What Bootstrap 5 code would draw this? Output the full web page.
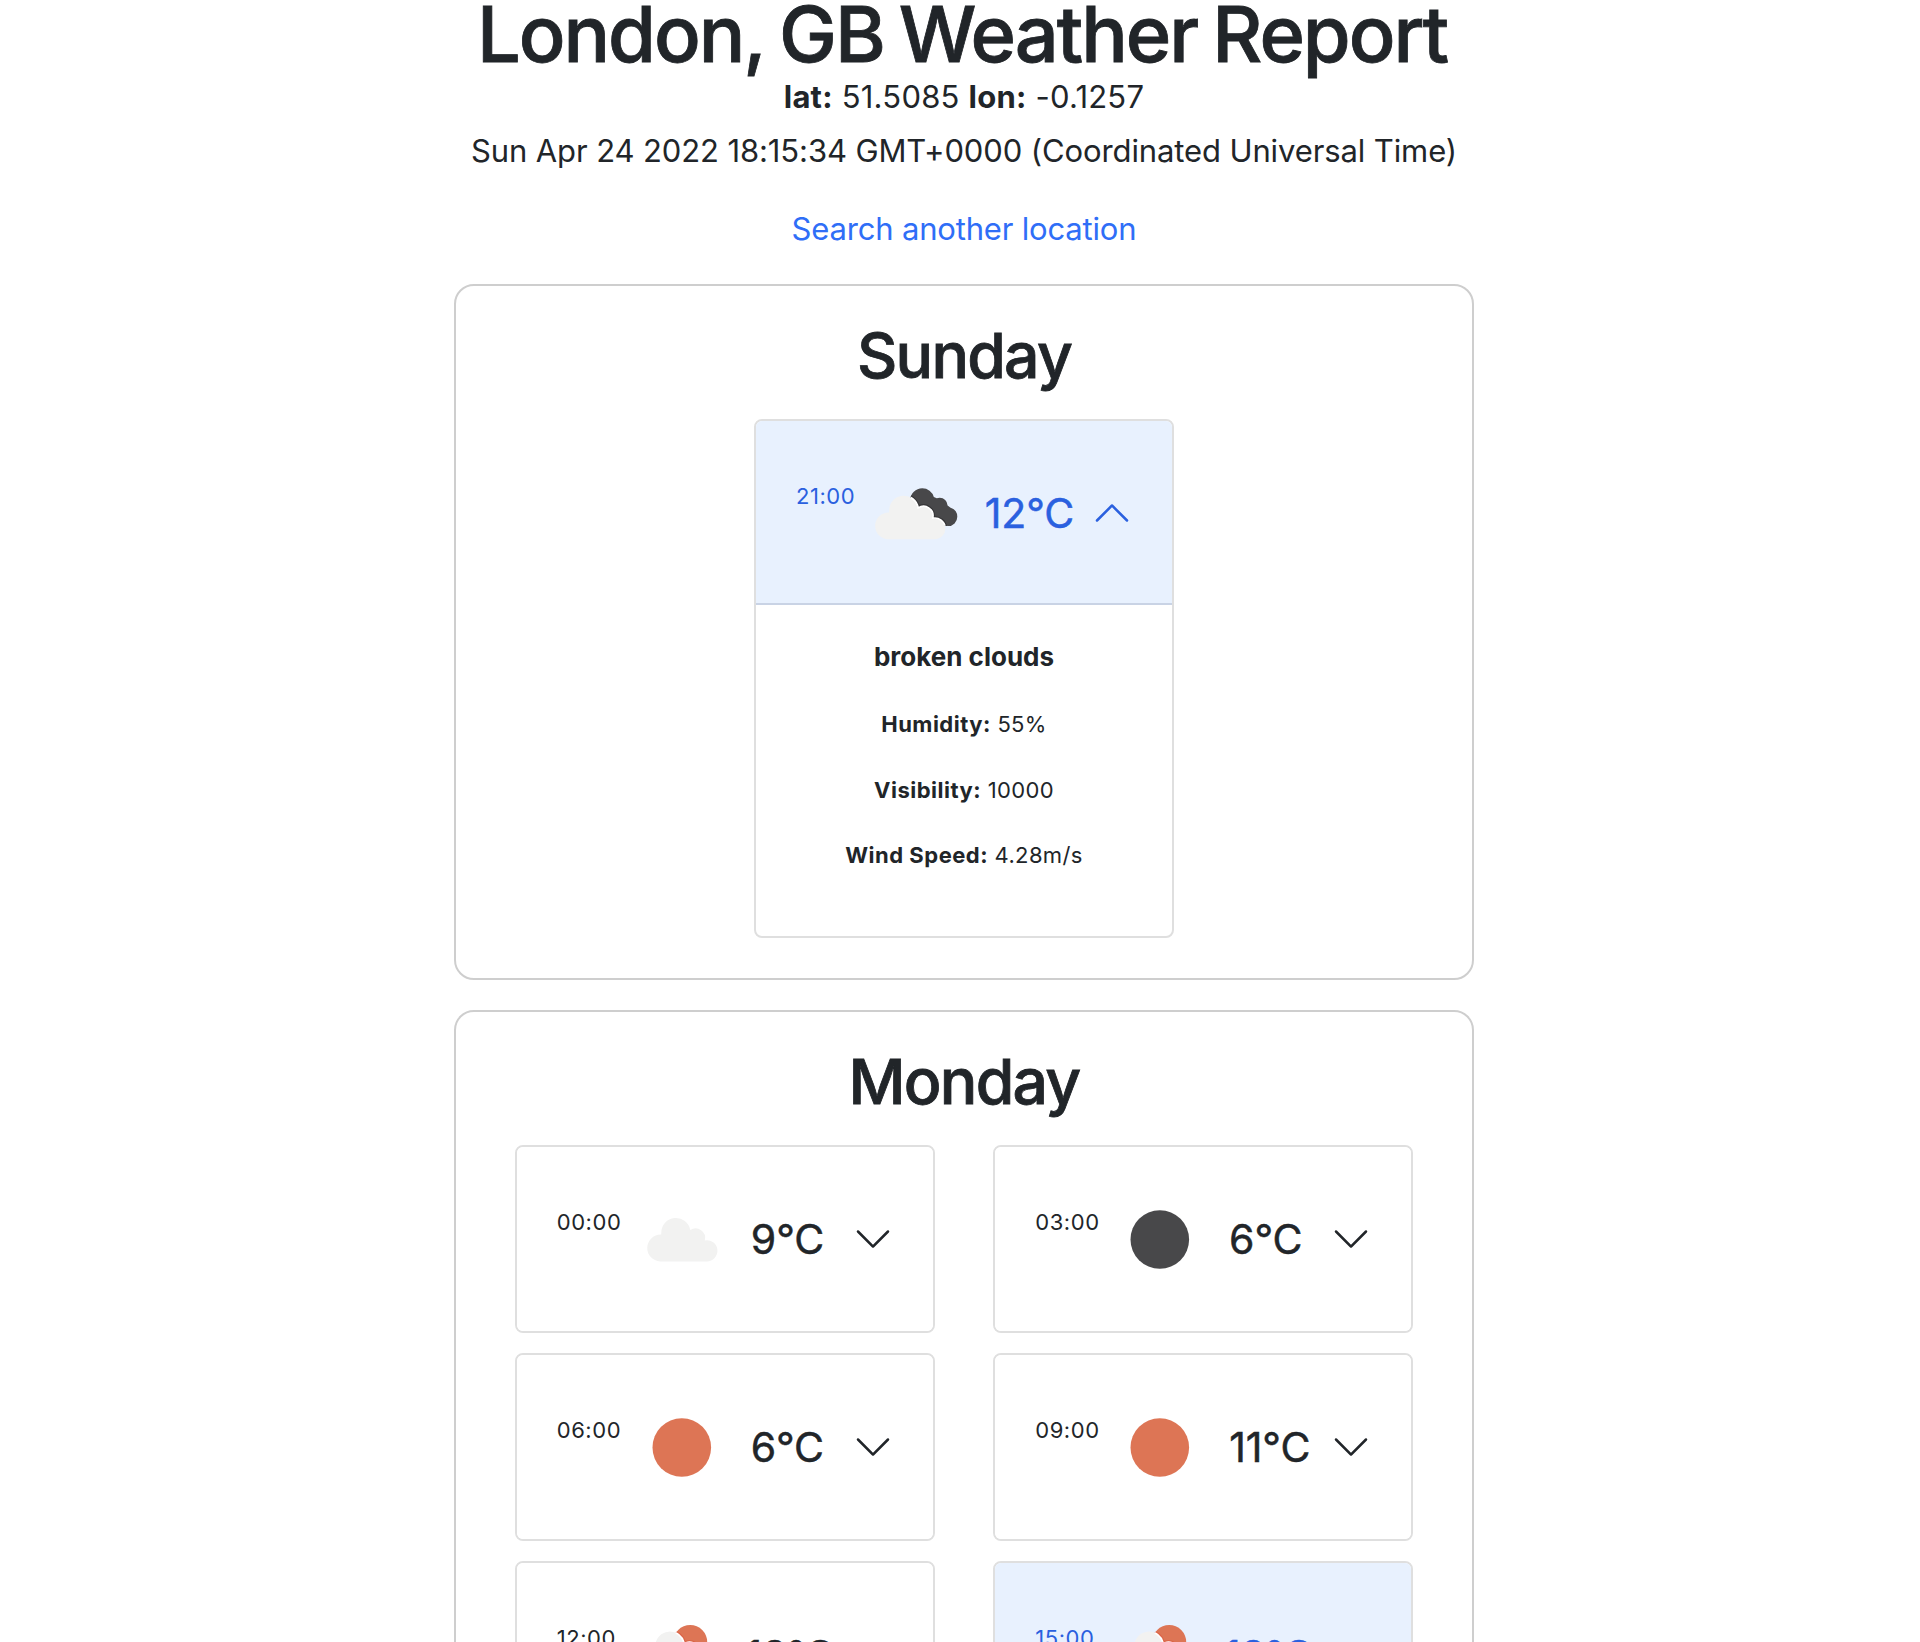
<!DOCTYPE html>
<html lang="en">
<head>
<meta charset="utf-8">
<meta name="viewport" content="width=device-width, initial-scale=1">
<title>London, GB Weather Report</title>
<link href="https://cdn.jsdelivr.net/npm/bootstrap@5.3.0/dist/css/bootstrap.min.css" rel="stylesheet">
<style>
body{font-family:Inter,"Liberation Sans",sans-serif;font-size:31px;line-height:48px;letter-spacing:-.11px;color:#212529;background:#fff}
.report{height:100vh;overflow:hidden;padding-left:8px}
.report-title{font-size:77.5px;font-weight:500;-webkit-text-stroke:.8px currentColor;line-height:78px;letter-spacing:-2.05px;word-spacing:-3.5px;margin:-5px 4px 0 0}
.coords{letter-spacing:.22px;margin-bottom:6px}
.stamp{margin-bottom:30px}
.search{letter-spacing:-.18px;margin-bottom:31px}
.search a{color:#2f6ef7}
.day{width:1020px;border:2px solid #cecece;border-radius:20px;padding:31px 0 40px;margin:0 auto 30px}
.day-name{font-size:62.5px;font-weight:500;-webkit-text-stroke:.8px currentColor;line-height:77px;letter-spacing:-1.75px;margin-bottom:25px}
.slots{gap:20px 58.5px}
.slot{width:420px;border:2px solid #dfdfdf;border-radius:8px;overflow:hidden}
.slot-head{height:184px;padding:0 40px;background:#fff;border:0;color:#212529;text-align:left}
.slot-head.open{background:#e8f1fe;color:#2a60df;box-shadow:inset 0 -2px #c9d3e5}
.slot-time{font-size:22px;line-height:34px;letter-spacing:.55px;margin:0 10.5px 34px 0}
.sky{width:100px;height:100px;flex:none}
.temp{font-size:41px;font-weight:400;-webkit-text-stroke:.5px currentColor;letter-spacing:-.1px;margin-left:19px}
.chev{width:40px;height:40px;flex:none}
.open .chev{transform:rotate(180deg)}
.slot-body{height:331px;padding-top:33px;font-size:22px;line-height:34px;letter-spacing:.35px}
.slot-body p{margin-bottom:31.7px}
.slot-body b{letter-spacing:.5px}
.slot-body .sky-text{font-size:26px;line-height:38px;letter-spacing:0;font-weight:700;margin-bottom:31px}
</style>
<script src="https://cdn.jsdelivr.net/npm/bootstrap@5.3.0/dist/js/bootstrap.bundle.min.js"></script>
</head>
<body>
<svg width="0" height="0" class="position-absolute" aria-hidden="true">
<defs>
<path id="cloud" d="M28 72.4A13.4 13.4 0 1 1 29.1 45.6L29.2 43.7A14.6 14.6 0 0 1 58.2 41.1A9.5 9.5 0 0 1 72.7 51.4A10.6 10.6 0 1 1 74.6 72.4Z"/>
<clipPath id="backClip"><circle cx="56.3" cy="37.2" r="12"/><circle cx="73.7" cy="42.7" r="7.9"/><circle cx="82" cy="53.8" r="9.3"/><path d="M48 46L60 30L68 34L76 38L86 46L84 58L72 66Z"/></clipPath>
<clipPath id="sunClip"><circle cx="64.2" cy="36.9" r="17"/></clipPath>
<path id="chevron" fill-rule="evenodd" d="M1.646 4.646a.5.5 0 0 1 .708 0L8 10.293l5.646-5.647a.5.5 0 0 1 .708.708l-6 6a.5.5 0 0 1-.708 0l-6-6a.5.5 0 0 1 0-.708z"/>
<symbol id="clouds" viewBox="0 0 100 100"><g fill="#f2f2f1"><use href="#cloud" x=".1"/></g></symbol>
<symbol id="clear-night" viewBox="0 0 100 100"><circle cx="49.8" cy="50.5" r="29.3" fill="#48484a"/></symbol>
<symbol id="clear-day" viewBox="0 0 100 100"><circle cx="49.8" cy="50.5" r="29.3" fill="#dd7555"/></symbol>
<symbol id="broken" viewBox="0 0 100 100">
<g clip-path="url(#backClip)"><rect width="100" height="100" fill="#48484a"/><use href="#cloud" x="-6" y="3.8" stroke="#363638" stroke-width="4"/></g>
<use href="#cloud" x="-6" y="3.8" fill="#f2f2f1"/>
<g clip-path="url(#backClip)"><use href="#cloud" x="-6" y="3.8" fill="none" stroke="#fff" stroke-width="1.6"/></g>
</symbol>
<symbol id="few" viewBox="0 0 100 100">
<g clip-path="url(#sunClip)"><rect width="100" height="100" fill="#dd7555"/><use href="#cloud" x="0" y="-2.3" stroke="#dc6548" stroke-width="4"/></g>
<use href="#cloud" x="0" y="-2.3" fill="#f2f2f1"/>
<g clip-path="url(#sunClip)"><use href="#cloud" x="0" y="-2.3" fill="none" stroke="#fff" stroke-width="1.6"/></g>
</symbol>
</defs>
</svg>

<main class="report text-center">
  <h1 class="report-title">London, GB Weather Report</h1>
  <p class="coords"><b>lat:</b> 51.5085 <b>lon:</b> -0.1257</p>
  <p class="stamp">Sun Apr 24 2022 18:15:34 GMT+0000 (Coordinated Universal Time)</p>
  <p class="search"><a href="#" class="text-decoration-none">Search another location</a></p>

  <section class="day">
    <h2 class="day-name">Sunday</h2>
    <div class="slots d-flex flex-wrap justify-content-center">
      <div class="slot">
        <button class="slot-head open d-flex align-items-center w-100"><span class="slot-time">21:00</span><svg class="sky"><use href="#broken"/></svg><span class="temp">12°C</span><svg class="chev ms-auto" viewBox="0 0 16 16" fill="currentColor"><use href="#chevron"/></svg></button>
        <div class="slot-body">
          <p class="sky-text">broken clouds</p>
          <p><b>Humidity:</b> 55%</p>
          <p><b>Visibility:</b> 10000</p>
          <p><b>Wind Speed:</b> 4.28m/s</p>
        </div>
      </div>
    </div>
  </section>

  <section class="day">
    <h2 class="day-name">Monday</h2>
    <div class="slots d-flex flex-wrap justify-content-center align-items-start">
      <div class="slot"><button class="slot-head d-flex align-items-center w-100"><span class="slot-time">00:00</span><svg class="sky"><use href="#clouds"/></svg><span class="temp">9°C</span><svg class="chev ms-auto" viewBox="0 0 16 16" fill="currentColor"><use href="#chevron"/></svg></button></div>
      <div class="slot"><button class="slot-head d-flex align-items-center w-100"><span class="slot-time">03:00</span><svg class="sky"><use href="#clear-night"/></svg><span class="temp">6°C</span><svg class="chev ms-auto" viewBox="0 0 16 16" fill="currentColor"><use href="#chevron"/></svg></button></div>
      <div class="slot"><button class="slot-head d-flex align-items-center w-100"><span class="slot-time">06:00</span><svg class="sky"><use href="#clear-day"/></svg><span class="temp">6°C</span><svg class="chev ms-auto" viewBox="0 0 16 16" fill="currentColor"><use href="#chevron"/></svg></button></div>
      <div class="slot"><button class="slot-head d-flex align-items-center w-100"><span class="slot-time">09:00</span><svg class="sky"><use href="#clear-day"/></svg><span class="temp">11°C</span><svg class="chev ms-auto" viewBox="0 0 16 16" fill="currentColor"><use href="#chevron"/></svg></button></div>
      <div class="slot"><button class="slot-head d-flex align-items-center w-100"><span class="slot-time">12:00</span><svg class="sky"><use href="#few"/></svg><span class="temp">13°C</span><svg class="chev ms-auto" viewBox="0 0 16 16" fill="currentColor"><use href="#chevron"/></svg></button></div>
      <div class="slot"><button class="slot-head open d-flex align-items-center w-100"><span class="slot-time">15:00</span><svg class="sky"><use href="#few"/></svg><span class="temp">13°C</span><svg class="chev ms-auto" viewBox="0 0 16 16" fill="currentColor"><use href="#chevron"/></svg></button></div>
    </div>
  </section>
</main>
</body>
</html>
